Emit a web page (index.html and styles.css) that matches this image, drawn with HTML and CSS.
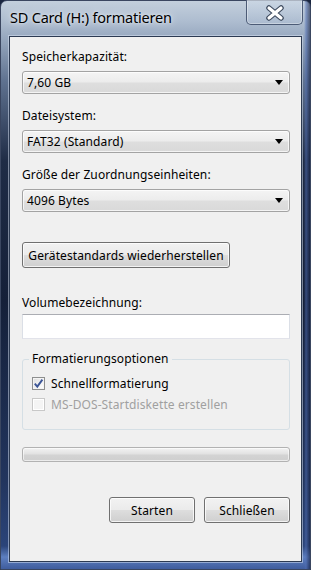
FILE: index.html
```html
<!DOCTYPE html>
<html lang="de">
<head>
<meta charset="utf-8">
<title>SD Card (H:) formatieren</title>
<link rel="stylesheet" href="styles.css">
</head>
<body>
<div class="window">
  <div class="titlebar">
    <span class="title">SD Card (H:) formatieren</span>
    <div class="close">
      <svg width="22" height="16" viewBox="0 0 22 16">
        <path d="M5 3 L17 13 M17 3 L5 13" stroke="#3d4a5e" stroke-width="5.5" stroke-linecap="round"/>
        <path d="M5 3 L17 13 M17 3 L5 13" stroke="#ffffff" stroke-width="3.2" stroke-linecap="round"/>
      </svg>
    </div>
  </div>
  <div class="client">
    <div class="label l1">Speicherkapazität:</div>
    <div class="combo"><span>7,60 GB</span><i class="arrow"></i></div>
    <div class="label l2">Dateisystem:</div>
    <div class="combo"><span>FAT32 (Standard)</span><i class="arrow"></i></div>
    <div class="label l2">Größe der Zuordnungseinheiten:</div>
    <div class="combo"><span>4096 Bytes</span><i class="arrow"></i></div>
    <div class="btn restore">Gerätestandards wiederherstellen</div>
    <div class="label l4">Volumebezeichnung:</div>
    <div class="textbox"></div>
    <div class="group">
      <span class="legend">Formatierungsoptionen</span>
      <div class="check">
        <span class="box checked">
          <svg width="11" height="11" viewBox="0 0 11 11"><path d="M1.8 5.6 L4.3 8.6 L9.4 1.6" stroke="#3c5596" stroke-width="1.9" fill="none"/></svg>
        </span>
        <span>Schnellformatierung</span>
      </div>
      <div class="check disabled">
        <span class="box"></span>
        <span>MS-DOS-Startdiskette erstellen</span>
      </div>
    </div>
    <div class="progress"></div>
    <div class="actions">
      <div class="btn action">Starten</div>
      <div class="btn action">Schließen</div>
    </div>
  </div>
</div>
</body>
</html>
```
FILE: styles.css
```css
html, body {
  margin: 0;
  padding: 0;
}
body {
  width: 311px;
  height: 570px;
  overflow: hidden;
  background: #1a2640;
  font-family: "Noto Sans", "Open Sans", sans-serif;
}
.window {
  width: 311px;
  height: 570px;
  box-sizing: border-box;
  border-radius: 7px 7px 0 0;
  border: 1px solid #3a4660;
  background:
    linear-gradient(90deg, rgba(120,150,210,0) 0px, rgba(120,150,210,0) 303px, rgba(80,110,180,0.55) 305px, rgba(20,30,60,0.6) 309px),
    linear-gradient(180deg, #c3cfdc 0px, #aebdd0 20px, #98a9c0 36px, #5f7290 80px, #1f2c46 160px, #152039 300px, #22355e 480px, #2b4479 545px, #5d7fc0 556px, #3a5798 570px);
  display: flex;
  flex-direction: column;
  position: relative;
}
.titlebar {
  height: 35px;
  display: flex;
  align-items: flex-start;
  position: relative;
}
.title {
  font-family: "Noto Sans", "Open Sans", sans-serif;
  font-size: 14.5px;
  color: #000;
  margin: 6px 0 0 9px;
  text-shadow: 0 0 8px rgba(255,255,255,0.9), 0 0 3px rgba(255,255,255,0.7);
  letter-spacing: -0.2px;
}
.close {
  position: absolute;
  right: 7px;
  top: -1px;
  width: 57px;
  height: 25px;
  box-sizing: border-box;
  border: 1px solid #4c5b76;
  border-top: none;
  border-radius: 0 0 5px 5px;
  background: linear-gradient(180deg, rgba(210,222,236,0.45), rgba(170,186,208,0.35));
  box-shadow: inset 0 0 0 1px rgba(255,255,255,0.35);
  display: flex;
  align-items: center;
  justify-content: center;
}
.close svg { margin-top: 1px; }
.client {
  margin: 0 8px 0 8px;
  height: 526px;
  box-sizing: border-box;
  border: 1px solid #2c3a52;
  background: #f0f0f0;
  box-shadow: 0 0 0 1px rgba(220,230,245,0.5);
  padding: 0 12px 0 12px;
  display: flex;
  flex-direction: column;
  font-size: 12px;
  letter-spacing: 0.1px;
  color: #000;
}
.label {
  line-height: 15px;
  height: 15px;
  white-space: nowrap;
}
.l1 { margin-top: 12px; }
.l2 { margin-top: 14px; }
.l4 { margin-top: 27px; }
.combo {
  margin-top: 7px;
  width: 268px;
  height: 23px;
  box-sizing: border-box;
  border: 1px solid #a3a3a3;
  border-radius: 3px;
  background: linear-gradient(180deg, #f4f4f4 0%, #ececec 48%, #dedede 52%, #d9d9d9 100%);
  box-shadow: inset 0 0 0 1px rgba(255,255,255,0.7);
  display: flex;
  align-items: center;
  padding-left: 4px;
  position: relative;
}
.arrow {
  position: absolute;
  right: 6px;
  top: 8px;
  width: 0;
  height: 0;
  border-left: 4px solid transparent;
  border-right: 4px solid transparent;
  border-top: 5px solid #000;
}
.btn {
  box-sizing: border-box;
  border: 1px solid #707070;
  border-radius: 3px;
  background: linear-gradient(180deg, #f2f2f2 0%, #ebebeb 48%, #dddddd 52%, #cfcfcf 100%);
  box-shadow: inset 0 0 0 1px rgba(255,255,255,0.75);
  display: flex;
  align-items: center;
  justify-content: center;
  white-space: nowrap;
}
.restore {
  margin-top: 30px;
  width: 208px;
  height: 26px;
}
.textbox {
  margin-top: 4px;
  width: 268px;
  height: 25px;
  box-sizing: border-box;
  background: #fff;
  border: 1px solid #e2e3ea;
  border-top-color: #abadb3;
  border-left-color: #dbdfe6;
  border-right-color: #dbdfe6;
}
.group {
  margin-top: 20px;
  width: 268px;
  height: 71px;
  box-sizing: border-box;
  border: 1px solid #d5dfe5;
  border-radius: 3px;
  position: relative;
  padding: 16px 0 0 9px;
  display: flex;
  flex-direction: column;
  gap: 6px;
}
.legend {
  position: absolute;
  top: -9px;
  left: 6px;
  padding: 0 3px;
  background: #f0f0f0;
  line-height: 15px;
}
.check {
  display: flex;
  align-items: center;
  gap: 6px;
  line-height: 15px;
}
.box {
  width: 13px;
  height: 13px;
  box-sizing: border-box;
  border: 1px solid #8e8f8f;
  background: linear-gradient(135deg, #dcdcdc 0%, #f4f4f4 60%, #ffffff 100%);
  box-shadow: inset 0 0 0 1px #f4f4f4;
  display: flex;
  align-items: center;
  justify-content: center;
}
.disabled { color: #a0a0a0; }
.disabled .box {
  border-color: #c8c8c8;
  background: #f4f4f4;
  box-shadow: inset 0 0 0 1px #ffffff;
}
.progress {
  margin-top: 17px;
  width: 268px;
  height: 15px;
  box-sizing: border-box;
  border: 1px solid #b2b2b2;
  border-radius: 3px;
  background: linear-gradient(180deg, #f3f3f3 0%, #e2e2e2 45%, #d3d3d3 55%, #cfcfcf 100%);
  box-shadow: inset 0 0 0 1px rgba(255,255,255,0.6);
}
.actions {
  margin-top: 35px;
  width: 268px;
  display: flex;
  justify-content: flex-end;
  gap: 9px;
}
.action {
  width: 86px;
  height: 26px;
}
```
